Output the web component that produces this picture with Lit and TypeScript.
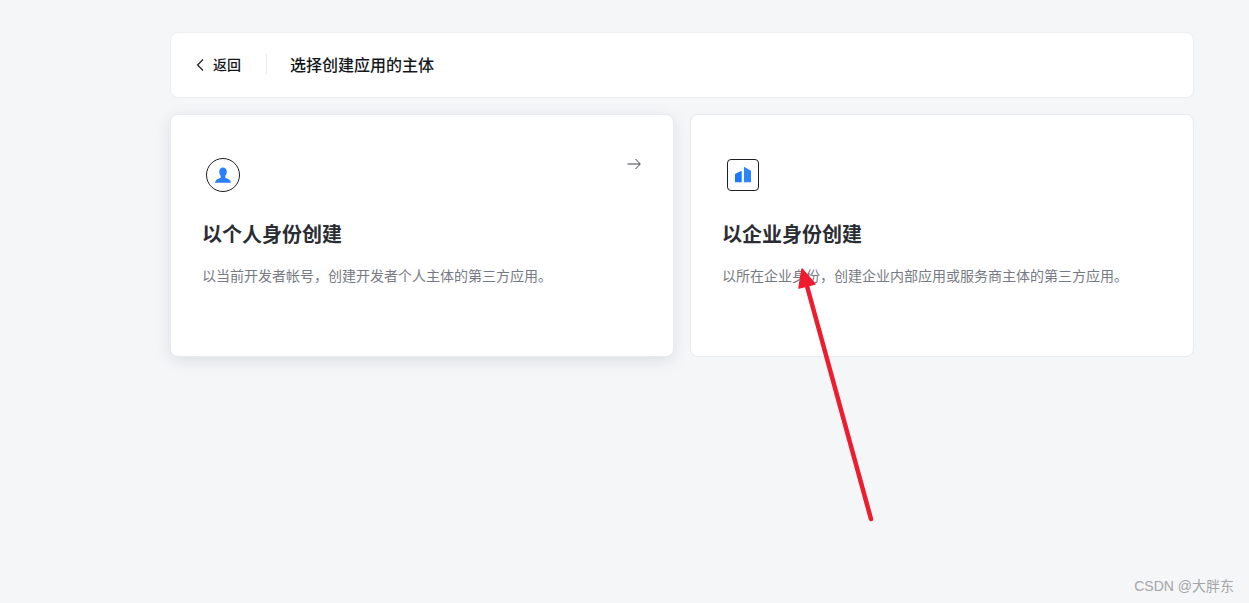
import { LitElement, html, css, svg } from "lit";
import { customElement } from "lit/decorators.js";

@customElement("app-root")
export class AppRoot extends LitElement {
  static styles = css`
    :host {
      display: block;
      position: relative;
      height: 603px;
      overflow: hidden;
      background: #f5f6f8;
      font-family: "Noto Sans CJK SC", "Noto Sans", sans-serif;
      box-sizing: border-box;
    }
    .page {
      display: flex;
      flex-direction: column;
      gap: 16px;
      padding: 32px 55px 0 170px;
    }
    .header {
      display: flex;
      align-items: center;
      height: 66px;
      box-sizing: border-box;
      padding: 0 0 2px 25px;
      background: #fff;
      border: 1px solid #eceef1;
      border-radius: 8px;
    }
    .back {
      display: flex;
      align-items: center;
      gap: 9px;
      width: 70px;
      height: 20px;
      border-right: 1px solid #e8eaed;
      font-size: 14px;
      font-weight: 500;
      color: #14171c;
    }
    .back svg { display: block; margin-top: 2px; }
    .head-title {
      margin-left: 23px;
      font-size: 16px;
      font-weight: 500;
      color: #14171c;
    }
    .cards {
      display: grid;
      grid-template-columns: 504px 504px;
      gap: 16px;
    }
    .card {
      position: relative;
      height: 243px;
      box-sizing: border-box;
      padding: 42px 31px 0;
      background: #fff;
      border: 1px solid #e8eaed;
      border-radius: 8px;
    }
    .card.active {
      box-shadow: 0 4px 16px rgba(20, 30, 50, 0.1);
    }
    .icon { display: block; width: 40px; height: 36px; margin-left: 1px; }
    .go { position: absolute; top: 43px; right: 32px; }
    h3 {
      margin: 25px 0 0;
      font-size: 20px;
      line-height: 32px;
      font-weight: 700;
      color: #2a2d33;
    }
    p {
      margin: 14px 0 0;
      font-size: 14px;
      line-height: 22px;
      color: #767a82;
    }
    .pointer {
      position: absolute;
      left: 0;
      top: 0;
      pointer-events: none;
    }
    .mark {
      position: absolute;
      right: 15px;
      top: 576px;
      font-size: 14px;
      line-height: 20px;
      color: #a3a5a8;
      font-family: "Liberation Sans", "Noto Sans CJK SC", sans-serif;
    }
  `;

  private chevron = svg`<svg width="8" height="14" viewBox="0 0 8 14" fill="none"><path d="M7 1.5 1.600 7 7 12.500" stroke="#2a2d33" stroke-width="1.400"/></svg>`;

  private personIcon = svg`<svg class="icon" viewBox="0 0 40 36" fill="none">
    <circle cx="20" cy="18" r="16.500" stroke="#1c1f24" stroke-width="1"/>
    <path d="M20 10.500c2.300 0 3.800 1.700 3.800 4.200 0 1.700-.6 3-1.500 4v1.200c0 .8.600 1.100 1.600 1.500 1.800.7 3.600 1.300 4.100 4.300H12c.5-3 2.300-3.600 4.100-4.300 1-.4 1.600-.7 1.600-1.500v-1.200c-.9-1-1.500-2.300-1.500-4 0-2.500 1.500-4.200 3.800-4.200z" fill="#2b7fff"/>
  </svg>`;

  private orgIcon = svg`<svg class="icon" viewBox="0 0 40 36" fill="none">
    <rect x="4.500" y="2.500" width="31" height="31" rx="3.500" stroke="#1c1f24" stroke-width="1"/>
    <path d="M12 17 18.700 13.700V25.300H12z" fill="#1677ff"/>
    <path d="M21 9.700 28 13.700V25.300H21z" fill="#2b85ff"/>
  </svg>`;

  render() {
    return html`
      <div class="page">
        <div class="header">
          <div class="back">${this.chevron}<span>返回</span></div>
          <div class="head-title">选择创建应用的主体</div>
        </div>
        <div class="cards">
          <div class="card active">
            ${this.personIcon}
            <svg class="go" width="14" height="12" viewBox="0 0 14 12" fill="none"><path d="M0.500 6H13M8.500 1l4.800 5-4.800 5" stroke="#3c3f44" stroke-width="1"/></svg>
            <h3>以个人身份创建</h3>
            <p>以当前开发者帐号，创建开发者个人主体的第三方应用。</p>
          </div>
          <div class="card">
            ${this.orgIcon}
            <h3>以企业身份创建</h3>
            <p>以所在企业身份，创建企业内部应用或服务商主体的第三方应用。</p>
          </div>
        </div>
      </div>
      <svg class="pointer" width="1249" height="603" viewBox="0 0 1249 603" fill="none">
        <path d="M871 519 807 286" stroke="#ee1c2e" stroke-width="4.500" stroke-linecap="round"/>
        <path d="M802 269 815 284 799 288z" fill="#ee1c2e" stroke="#ee1c2e" stroke-width="1.500" stroke-linejoin="round"/>
      </svg>
      <div class="mark">CSDN @大胖东</div>
    `;
  }
}
